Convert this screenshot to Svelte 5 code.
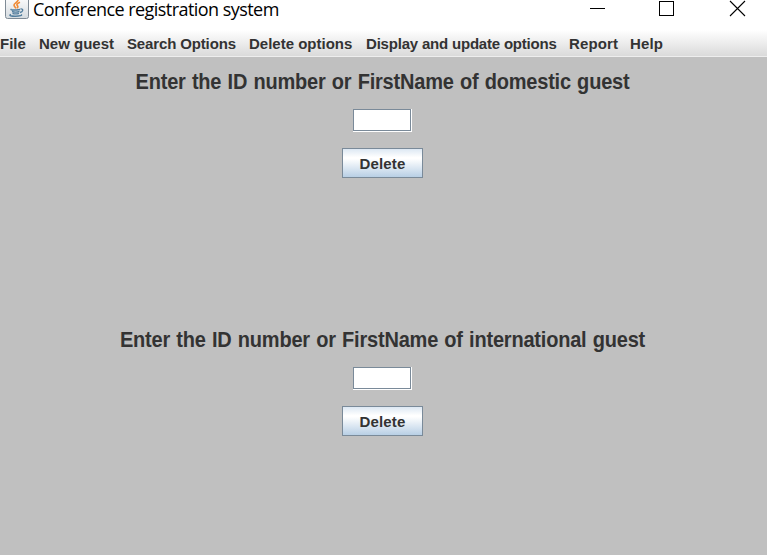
<script>
  const menus = [
    { label: 'File', width: 39, tracking: 0 },
    { label: 'New guest', width: 88, tracking: 0 },
    { label: 'Search Options', width: 122, tracking: -0.14 },
    { label: 'Delete options', width: 117, tracking: 0 },
    { label: 'Display and update options', width: 203, tracking: -0.2 },
    { label: 'Report', width: 61, tracking: 0.15 },
    { label: 'Help', width: 45, tracking: 0.15 }
  ];
  const forms = ['domestic', 'international'];
</script>

<div class="window">
  <header>
    <svg class="java" width="24" height="20" viewBox="0 0 24 20">
      <defs>
        <linearGradient id="tile" x1="0" y1="0" x2="0" y2="1">
          <stop offset="0" stop-color="#fff" />
          <stop offset="1" stop-color="#d5dbe0" />
        </linearGradient>
      </defs>
      <path d="M.5-4V16.5Q.5 18.5 2.5 18.5H21.5Q23.5 18.5 23.5 16.5V-4" fill="url(#tile)" stroke="#7f8b96" />
      <path d="M13-1C14.500 1.500 9 3 9 5C9 6.500 10.500 7 11 8.500M15 2.300C12 3.300 11.300 4.500 12.500 5.800C13.200 6.700 12.800 7.500 12.100 8.200" fill="none" stroke="#ef8a35" stroke-width="1.600" />
      <path d="M6.500 9.200C4.500 10 8.500 10.400 15 9.500M7 11.500Q10.500 12.700 14.500 11.500M7.500 13.300Q10.500 14.500 14 13.300M15.500 9C19 8.500 18 12 15 12.500M6 14.300C2.500 15.500 7 16.300 10.500 16.200C14.500 16.200 18 15.400 16 14.500" fill="none" stroke="#527e9e" stroke-width="1.350" />
    </svg>
    <h1>Conference registration system</h1>
    <svg class="controls" width="157" height="20" viewBox="0 0 157 20" fill="none" stroke="#000">
      <path d="M0 8.500H15M69.500 1.500H83.500V15.500H69.500Z" shape-rendering="crispEdges" />
      <path d="M140 1L155 16M155 1L140 16" stroke-width="1.100" />
    </svg>
  </header>
  <nav>
    {#each menus as menu}
      <span style:width="{menu.width}px" style:letter-spacing="{menu.tracking}px">{menu.label}</span>
    {/each}
  </nav>
  <main>
    {#each forms as kind}
      <section>
        <h2>Enter the ID number or FirstName of {kind} guest</h2>
        <div class="field"><input type="text" aria-label="{kind} guest" /></div>
        <button>Delete</button>
      </section>
    {/each}
  </main>
</div>

<style>
  .window {
    width: 767px;
    height: 555px;
    overflow: hidden;
    display: flex;
    flex-direction: column;
    background: #c0c0c0;
    color: #333;
    font-family: "Liberation Sans", Arial, sans-serif;
  }
  header {
    height: 30px;
    flex: none;
    display: flex;
    align-items: flex-start;
    background: #fff;
    padding-left: 5px;
  }
  .java { flex: none; }
  h1 {
    margin: 0 0 0 4px;
    font: 400 18px/20px "Open Sans", "Noto Sans", sans-serif;
    line-height: 19px;
    letter-spacing: -0.55px;
    color: #000;
    white-space: nowrap;
  }
  .controls { margin: 0 20px 0 auto; flex: none; }
  nav {
    height: 27px;
    flex: none;
    box-sizing: border-box;
    display: flex;
    border-bottom: 1px solid #eee;
    background: linear-gradient(#fff, #dadada);
    font-size: 15px;
    font-weight: 700;
    line-height: 28px;
    white-space: nowrap;
  }
  nav span { flex: none; }
  main {
    flex: 1;
    display: flex;
    flex-direction: column;
  }
  section {
    height: 258px;
    flex: none;
    box-sizing: border-box;
    padding: 13px 2px 0 0;
    display: flex;
    flex-direction: column;
    align-items: center;
  }
  h2 {
    margin: 0;
    font-size: 20px;
    line-height: 24px;
    letter-spacing: -0.2px;
    word-spacing: 0.9px;
    transform: scaleY(1.06);
    white-space: nowrap;
  }
  .field {
    width: 59px;
    height: 23px;
    margin-top: 15px;
    box-sizing: border-box;
    border: solid #fff;
    border-width: 0 1px 1px 0;
  }
  input {
    display: block;
    width: 58px;
    height: 22px;
    box-sizing: border-box;
    padding: 0 2px;
    border: 1px solid #7a8a99;
    border-radius: 0;
    background: #fff;
    outline: none;
  }
  button {
    width: 81px;
    height: 30px;
    margin-top: 16px;
    padding: 2px 0 0;
    border: 1px solid #7a8a99;
    border-radius: 0;
    background: linear-gradient(#dde8f3 0%, #fff 30%, #fff 35%, #b8cfe5 100%);
    color: #333;
    font: 700 15px/26px "Liberation Sans", Arial, sans-serif;
    letter-spacing: 0.2px;
  }
</style>
